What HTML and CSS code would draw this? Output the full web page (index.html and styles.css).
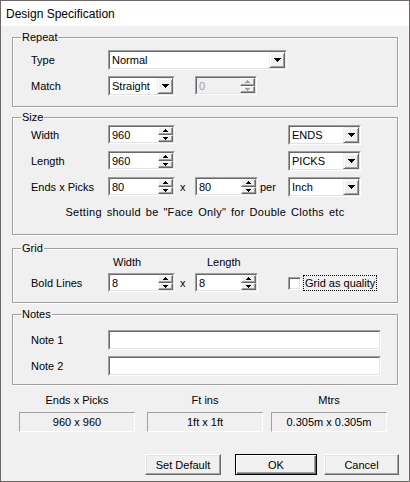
FILE: index.html
```html
<!DOCTYPE html>
<html>
<head>
<meta charset="utf-8">
<link rel="stylesheet" href="styles.css">
</head>
<body>
<div class="window">
  <div class="titlebar">Design Specification</div>
  <div class="client">

    <div class="group g-repeat">
      <span class="legend">Repeat</span>
      <div class="row">
        <span class="lbl">Type</span>
        <div class="combo w-type"><div class="in"><span class="val">Normal</span><span class="dd"><svg width="7" height="4" viewBox="0 0 7 4"><path d="M0 0h7v1H6v1H5v1H4v1H3V3H2V2H1V1H0z"/></svg></span></div></div>
      </div>
      <div class="row">
        <span class="lbl">Match</span>
        <div class="combo w-a"><div class="in"><span class="val">Straight</span><span class="dd"><svg width="7" height="4" viewBox="0 0 7 4"><path d="M0 0h7v1H6v1H5v1H4v1H3V3H2V2H1V1H0z"/></svg></span></div></div>
        <div class="spin disabled w-dis gap-x"><div class="in"><span class="val">0</span><span class="sb"><span class="sbtn"><svg width="5" height="3" viewBox="0 0 5 3"><path d="M2 0h1v1h1v1h1v1H0V2h1V1h1z"/></svg></span><span class="sbtn"><svg width="5" height="3" viewBox="0 0 5 3"><path d="M0 0h5v1H4v1H3v1H2V2H1V1H0z"/></svg></span></span></div></div>
      </div>
    </div>

    <div class="group g-size">
      <span class="legend">Size</span>
      <div class="row">
        <span class="lbl">Width</span>
        <div class="spin w-a"><div class="in"><span class="val">960</span><span class="sb"><span class="sbtn"><svg width="5" height="3" viewBox="0 0 5 3"><path d="M2 0h1v1h1v1h1v1H0V2h1V1h1z"/></svg></span><span class="sbtn"><svg width="5" height="3" viewBox="0 0 5 3"><path d="M0 0h5v1H4v1H3v1H2V2H1V1H0z"/></svg></span></span></div></div>
        <div class="combo w-unit push-unit"><div class="in"><span class="val">ENDS</span><span class="dd"><svg width="7" height="4" viewBox="0 0 7 4"><path d="M0 0h7v1H6v1H5v1H4v1H3V3H2V2H1V1H0z"/></svg></span></div></div>
      </div>
      <div class="row">
        <span class="lbl">Length</span>
        <div class="spin w-a"><div class="in"><span class="val">960</span><span class="sb"><span class="sbtn"><svg width="5" height="3" viewBox="0 0 5 3"><path d="M2 0h1v1h1v1h1v1H0V2h1V1h1z"/></svg></span><span class="sbtn"><svg width="5" height="3" viewBox="0 0 5 3"><path d="M0 0h5v1H4v1H3v1H2V2H1V1H0z"/></svg></span></span></div></div>
        <div class="combo w-unit push-unit"><div class="in"><span class="val">PICKS</span><span class="dd"><svg width="7" height="4" viewBox="0 0 7 4"><path d="M0 0h7v1H6v1H5v1H4v1H3V3H2V2H1V1H0z"/></svg></span></div></div>
      </div>
      <div class="row">
        <span class="lbl">Ends x Picks</span>
        <div class="spin w-a"><div class="in"><span class="val">80</span><span class="sb"><span class="sbtn"><svg width="5" height="3" viewBox="0 0 5 3"><path d="M2 0h1v1h1v1h1v1H0V2h1V1h1z"/></svg></span><span class="sbtn"><svg width="5" height="3" viewBox="0 0 5 3"><path d="M0 0h5v1H4v1H3v1H2V2H1V1H0z"/></svg></span></span></div></div>
        <span class="sep-x">x</span>
        <div class="spin w-b"><div class="in"><span class="val">80</span><span class="sb"><span class="sbtn"><svg width="5" height="3" viewBox="0 0 5 3"><path d="M2 0h1v1h1v1h1v1H0V2h1V1h1z"/></svg></span><span class="sbtn"><svg width="5" height="3" viewBox="0 0 5 3"><path d="M0 0h5v1H4v1H3v1H2V2H1V1H0z"/></svg></span></span></div></div>
        <span class="sep-per">per</span>
        <div class="combo w-unit"><div class="in"><span class="val">Inch</span><span class="dd"><svg width="7" height="4" viewBox="0 0 7 4"><path d="M0 0h7v1H6v1H5v1H4v1H3V3H2V2H1V1H0z"/></svg></span></div></div>
      </div>
      <div class="hint">Setting should be "Face Only" for Double Cloths etc</div>
    </div>

    <div class="group g-grid">
      <span class="legend">Grid</span>
      <div class="heads">
        <span class="h-width">Width</span>
        <span class="h-length">Length</span>
      </div>
      <div class="row">
        <span class="lbl">Bold Lines</span>
        <div class="spin w-a"><div class="in"><span class="val">8</span><span class="sb"><span class="sbtn"><svg width="5" height="3" viewBox="0 0 5 3"><path d="M2 0h1v1h1v1h1v1H0V2h1V1h1z"/></svg></span><span class="sbtn"><svg width="5" height="3" viewBox="0 0 5 3"><path d="M0 0h5v1H4v1H3v1H2V2H1V1H0z"/></svg></span></span></div></div>
        <span class="sep-x">x</span>
        <div class="spin w-b"><div class="in"><span class="val">8</span><span class="sb"><span class="sbtn"><svg width="5" height="3" viewBox="0 0 5 3"><path d="M2 0h1v1h1v1h1v1H0V2h1V1h1z"/></svg></span><span class="sbtn"><svg width="5" height="3" viewBox="0 0 5 3"><path d="M0 0h5v1H4v1H3v1H2V2H1V1H0z"/></svg></span></span></div></div>
        <label class="check"><span class="box"></span><span class="focus">Grid as quality</span></label>
      </div>
    </div>

    <div class="group g-notes">
      <span class="legend">Notes</span>
      <div class="row row-note">
        <span class="lbl">Note 1</span>
        <div class="edit w-note"><div class="in"></div></div>
      </div>
      <div class="row row-note">
        <span class="lbl">Note 2</span>
        <div class="edit w-note"><div class="in"></div></div>
      </div>
    </div>

    <div class="readouts">
      <div class="ro">
        <span class="ro-lbl">Ends x Picks</span>
        <div class="ro-box">960 x 960</div>
      </div>
      <div class="ro ro2">
        <span class="ro-lbl">Ft ins</span>
        <div class="ro-box">1ft x 1ft</div>
      </div>
      <div class="ro ro3">
        <span class="ro-lbl">Mtrs</span>
        <div class="ro-box">0.305m x 0.305m</div>
      </div>
    </div>

    <div class="buttons">
      <button class="btn b-def">Set Default</button>
      <button class="btn b-ok">OK</button>
      <button class="btn b-cancel">Cancel</button>
    </div>

  </div>
</div>
</body>
</html>
```

FILE: styles.css
```css
* { box-sizing: border-box; }

body {
  margin: 0;
  background: #f0f0f0;
  font: 11px "Liberation Sans", Arial, sans-serif;
  color: #000;
}

.window {
  width: 410px;
  height: 482px;
  border: 1px solid #6f6767;
  background: #f0f0f0;
  display: flex;
  flex-direction: column;
}

.titlebar {
  height: 25px;
  background: #fff;
  padding-left: 5px;
  display: flex;
  align-items: center;
  font-size: 12px;
}

.client {
  padding: 11px 11px 0 11px;
  display: flex;
  flex-direction: column;
}

.group {
  position: relative;
  border: 1px solid #a0a0a0;
  box-shadow: 1px 1px 0 #fff, inset 1px 1px 0 #fff;
}

.legend {
  position: absolute;
  top: -7px;
  left: 8px;
  padding: 0 1px;
  line-height: 13px;
  background: #f0f0f0;
}

.row {
  display: flex;
  align-items: center;
  height: 19px;
  padding-left: 18px;
}

.row + .row { margin-top: 7px; }

.lbl { width: 77px; flex: none; }

/* sunken edit frame */
.edit, .combo, .spin {
  flex: none;
  height: 19px;
  border: 1px solid;
  border-color: #a0a0a0 #fff #fff #a0a0a0;
}
.combo { height: 20px; }

.edit > .in, .combo > .in, .spin > .in {
  height: 100%;
  display: flex;
  align-items: stretch;
  border: 1px solid;
  border-color: #696969 #e3e3e3 #e3e3e3 #696969;
  background: #fff;
}

.val {
  flex: 1;
  padding-left: 2px;
  display: flex;
  align-items: center;
  white-space: nowrap;
  overflow: hidden;
}

.dd {
  flex: none;
  width: 16px;
  display: flex;
  align-items: center;
  justify-content: center;
  background: #f0f0f0;
  border: 1px solid;
  border-color: #f0f0f0 #696969 #696969 #f0f0f0;
  box-shadow: inset 1px 1px 0 #fff, inset -1px -1px 0 #a0a0a0;
}
.dd svg { fill: #000; margin-left: 1px; }

.sb {
  flex: none;
  width: 15px;
  display: flex;
  flex-direction: column;
}
.sbtn {
  flex: 1;
  display: flex;
  align-items: center;
  justify-content: center;
  background: #f0f0f0;
  border: 1px solid;
  border-color: #fff #696969 #696969 #fff;
  box-shadow: inset -1px -1px 0 #a0a0a0;
}
.sbtn svg { fill: #000; }

.spin.disabled > .in { background: #f0f0f0; }
.spin.disabled .val { color: #a0a0a0; }
.spin.disabled .sbtn svg { fill: #a0a0a0; }

.w-type { width: 179px; }
.w-a { width: 67px; }
.w-b { width: 63px; }
.w-dis { width: 62px; }
.w-unit { width: 73px; }
.w-note { width: 273px; height: 20px; }
.gap-x { margin-left: 20px; }
.push-unit { margin-left: 113px; }

.sep-x {
  width: 20px;
  flex: none;
  padding-left: 5px;
}
.sep-per {
  width: 30px;
  flex: none;
  padding-left: 2px;
}

/* groups */
.g-repeat {
  height: 70px;
  padding-top: 12px;
}
.g-size {
  margin-top: 10px;
  height: 118px;
  padding-top: 7px;
}
.hint {
  margin-top: 10px;
  line-height: 13px;
  text-align: center;
  letter-spacing: 0.3px;
  word-spacing: 1.5px;
}
.g-grid {
  margin-top: 13px;
  height: 55px;
  padding-top: 7px;
}
.heads {
  display: flex;
  line-height: 13px;
  padding-left: 100px;
  margin-bottom: 4px;
}
.h-width { width: 94px; }
.g-notes {
  margin-top: 11px;
  height: 71px;
  padding-top: 15px;
}
.row-note { height: 20px; }
.row-note + .row-note { margin-top: 6px; }

.check {
  margin-left: 30px;
  display: flex;
  align-items: center;
}
.box {
  width: 13px;
  height: 13px;
  border: 1px solid;
  border-color: #a0a0a0 #fff #fff #a0a0a0;
  background: #fff;
  box-shadow: inset 1px 1px 0 #696969, inset -1px -1px 0 #e3e3e3;
  margin-right: 3px;
  margin-top: 1px;
}
.focus {
  outline: 1px dotted #000;
  outline-offset: 0;
  padding: 1px;
  line-height: 12px;
}

/* readouts */
.readouts {
  display: flex;
  margin-top: 9px;
  padding-left: 7px;
}
.ro {
  width: 116px;
  display: flex;
  flex-direction: column;
  align-items: center;
}
.ro2 { margin-left: 12px; }
.ro3 { margin-left: 8px; }
.ro-lbl { line-height: 13px; }
.ro-box {
  margin-top: 5px;
  width: 116px;
  height: 20px;
  border: 1px solid;
  border-color: #a0a0a0 #fff #fff #a0a0a0;
  display: flex;
  align-items: center;
  justify-content: center;
}

/* buttons */
.buttons {
  display: flex;
  justify-content: flex-end;
  margin-top: 22px;
}
.btn {
  font: inherit;
  color: #000;
  height: 21px;
  padding: 0;
  background: #f0f0f0;
  border: 1px solid;
  border-color: #fff #696969 #696969 #fff;
  box-shadow: inset -1px -1px 0 #a0a0a0, inset 1px 1px 0 #e3e3e3;
}
.b-def { width: 76px; }
.b-ok {
  width: 82px;
  margin-left: 14px;
  border: 1px solid #000;
  box-shadow: inset 1px 1px 0 #fff, inset -1px -1px 0 #696969, inset -2px -2px 0 #a0a0a0;
}
.b-cancel { width: 75px; margin-left: 7px; margin-right: -1px; }
```
